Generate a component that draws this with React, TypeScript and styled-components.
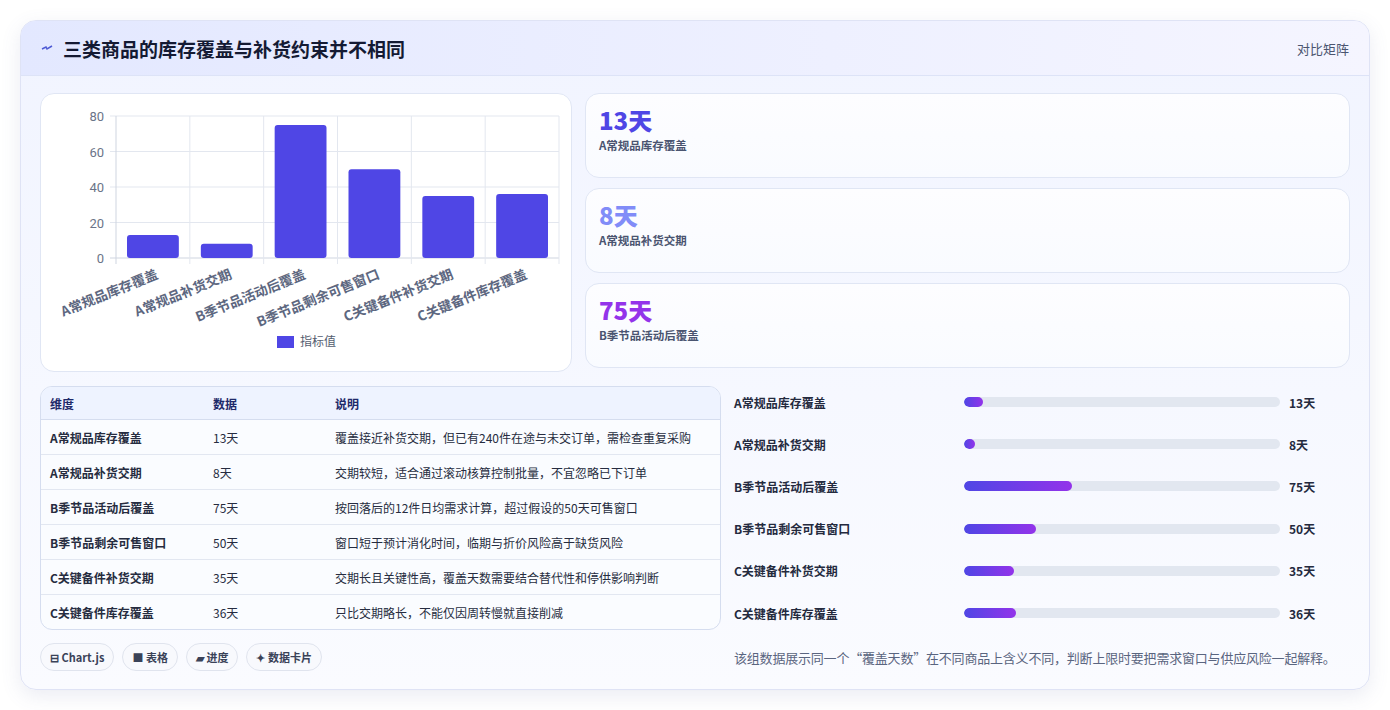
import React from "react";
import styled, { createGlobalStyle } from "styled-components";

const GlobalStyle = createGlobalStyle`
    body {
        margin: 0;
        background: #ffffff;
        font-family: "Noto Sans CJK SC", "Noto Sans", sans-serif;
    }
`;

const rows = [
    { name: "A常规品库存覆盖", value: 13, note: "覆盖接近补货交期，但已有240件在途与未交订单，需检查重复采购" },
    { name: "A常规品补货交期", value: 8, note: "交期较短，适合通过滚动核算控制批量，不宜忽略已下订单" },
    { name: "B季节品活动后覆盖", value: 75, note: "按回落后的12件日均需求计算，超过假设的50天可售窗口" },
    { name: "B季节品剩余可售窗口", value: 50, note: "窗口短于预计消化时间，临期与折价风险高于缺货风险" },
    { name: "C关键备件补货交期", value: 35, note: "交期长且关键性高，覆盖天数需要结合替代性和停供影响判断" },
    { name: "C关键备件库存覆盖", value: 36, note: "只比交期略长，不能仅因周转慢就直接削减" },
];

const Page = styled.div`
    padding: 20px;
`;
const Card = styled.div`
    border: 1px solid #dfe3f5;
    border-radius: 16px;
    overflow: hidden;
    background: linear-gradient(180deg, #f1f4ff 0%, #fafbff 100%);
    box-shadow: 0 6px 20px rgba(90, 100, 160, 0.12);
`;
const Header = styled.div`
    height: 54px;
    display: flex;
    align-items: center;
    justify-content: space-between;
    padding: 0 20px;
    background: linear-gradient(90deg, #e3e8ff 0%, #eef0ff 60%, #f5f5ff 100%);
    border-bottom: 1px solid #dde3f7;
`;
const Title = styled.h1`
    margin: 0;
    font-size: 19px;
    font-weight: 700;
    color: #141a33;
    display: flex;
    align-items: center;
    gap: 10px;
`;
const Tag = styled.span`
    font-size: 13px;
    color: #4b5570;
`;
const Body = styled.div`
    padding: 17px 19px 18px 19px;
    display: flex;
    flex-direction: column;
    gap: 14px;
`;
const Row = styled.div<{ $left: number; $gap: number }>`
    display: grid;
    grid-template-columns: ${p => p.$left}px 1fr;
    column-gap: ${p => p.$gap}px;
`;
const Panel = styled.div`
    background: #ffffff;
    border: 1px solid #e0e6f4;
    border-radius: 14px;
`;
const ChartPanel = styled(Panel)`
    height: 277px;
`;
const Stats = styled.div`
    display: flex;
    flex-direction: column;
    gap: 10px;
`;
const StatCard = styled(Panel)`
    height: 85px;
    padding: 10px 13px;
    box-sizing: border-box;
    background: linear-gradient(180deg, #fdfdff, #f9fbff);
`;
const StatValue = styled.div<{ $color: string }>`
    font-size: 24px;
    font-weight: 800;
    line-height: 32px;
    color: ${p => p.$color};
`;
const StatLabel = styled.div`
    font-size: 11.5px;
    font-weight: 700;
    color: #4a5470;
    margin-top: 1px;
`;
const LeftCol = styled.div`
    display: flex;
    flex-direction: column;
    gap: 13px;
`;
const Table = styled.table`
    width: 100%;
    border-collapse: separate;
    border-spacing: 0;
    border: 1px solid #d5ddef;
    border-radius: 12px;
    overflow: hidden;
    font-size: 12px;
    background: #fafcff;
    th {
        text-align: left;
        font-weight: 700;
        color: #1e2a6a;
        background: #eef3ff;
        height: 32px;
        border-bottom: 1px solid #d5ddef;
        padding: 0 9px;
    }
    td {
        height: 34px;
        padding: 0 9px;
        color: #262c40;
        border-bottom: 1px solid #e2e7f1;
    }
    tr:last-child td {
        border-bottom: none;
    }
`;
const NameCell = styled.td`
    font-weight: 700;
    width: 145px;
`;
const Chips = styled.div`
    display: flex;
    gap: 8px;
`;
const Chip = styled.span`
    border: 1px solid #e0e4ee;
    border-radius: 14px;
    background: #f8f9fd;
    font-size: 11px;
    font-weight: 700;
    color: #3a4258;
    height: 26px;
    padding: 0 9px;
    display: inline-flex;
    align-items: center;
    gap: 3px;
`;
const RightCol = styled.div`
    display: flex;
    flex-direction: column;
    margin-top: -5px;
`;
const BarRow = styled.div`
    display: grid;
    grid-template-columns: 221px 316px 1fr;
    align-items: center;
    height: 42.2px;
    column-gap: 9px;
`;
const BarLabel = styled.span`
    font-size: 12px;
    font-weight: 700;
    color: #242a3e;
`;
const Track = styled.div`
    height: 10px;
    border-radius: 5px;
    background: #e2e7f0;
    overflow: hidden;
`;
const Fill = styled.div`
    height: 100%;
    border-radius: 5px;
    background: linear-gradient(90deg, #4f46e5, #9333ea);
`;
const BarValue = styled.span`
    font-size: 12px;
    font-weight: 700;
    color: #242a3e;
`;
const Note = styled.p`
    margin: 14px 0 0;
    font-size: 13px;
    color: #5a6580;
    letter-spacing: -0.2px;
`;

function Chart() {
    const x0 = 75, x1 = 518, y0 = 164, y1 = 22;
    const step = (x1 - x0) / 6;
    const yOf = (v: number) => y0 - ((y0 - y1) * v) / 80;
    return (
        <svg width="531" height="277" viewBox="0 0 531 277">
            {[0, 20, 40, 60, 80].map(v => (
                <g key={v}>
                    <line x1={x0 - 6} x2={x1} y1={yOf(v)} y2={yOf(v)} stroke={v === 0 ? "#cfd5e0" : "#e3e7ef"} />
                    <text x={x0 - 12} y={yOf(v) + 5} textAnchor="end" fontSize="13" fill="#6b7488" fontFamily="Roboto, sans-serif">{v}</text>
                </g>
            ))}
            {Array.from({ length: 7 }).map((_, i) => (
                <line key={i} x1={x0 + i * step} x2={x0 + i * step} y1={y1} y2={y0 + 6} stroke={i === 0 ? "#cfd5e0" : "#e3e7ef"} />
            ))}
            {rows.map((r, i) => (
                <g key={r.name}>
                    <rect x={x0 + i * step + 11} y={yOf(r.value)} width={step - 22} height={y0 - yOf(r.value)} rx="3" fill="#4f46e5" />
                    <text
                        transform={`translate(${x0 + i * step + step / 2 + 6}, ${y0 + 20}) rotate(-22)`}
                        textAnchor="end"
                        fontSize="13.5"
                        fontWeight="700"
                        fill="#5d6780"
                        fontFamily='"Noto Sans CJK SC", sans-serif'
                    >
                        {r.name}
                    </text>
                </g>
            ))}
            <rect x="236" y="242" width="17" height="12" fill="#4f46e5" />
            <text x="259" y="252" fontSize="12" fill="#555d70" fontFamily='"Noto Sans CJK SC", sans-serif'>指标值</text>
        </svg>
    );
}

export default function App() {
    const colors = ["#4f46e5", "#818cf8", "#9333ea"];
    return (
        <Page>
            <GlobalStyle />
            <Card>
                <Header>
                    <Title>
                        <svg width="12" height="12" viewBox="0 0 12 12">
                            <path d="M1 7 L5 5 L6 7 L11 4" stroke="#4f5bd5" strokeWidth="1.5" fill="none" />
                        </svg>
                        三类商品的库存覆盖与补货约束并不相同
                    </Title>
                    <Tag>对比矩阵</Tag>
                </Header>
                <Body>
                    <Row $left={532} $gap={13}>
                        <ChartPanel>
                            <Chart />
                        </ChartPanel>
                        <Stats>
                            {rows.slice(0, 3).map((r, i) => (
                                <StatCard key={r.name}>
                                    <StatValue $color={colors[i]}>{r.value}天</StatValue>
                                    <StatLabel>{r.name}</StatLabel>
                                </StatCard>
                            ))}
                        </Stats>
                    </Row>
                    <Row $left={681} $gap={13}>
                        <LeftCol>
                            <Table>
                                <thead>
                                    <tr>
                                        <th>维度</th>
                                        <th style={{ width: 104 }}>数据</th>
                                        <th>说明</th>
                                    </tr>
                                </thead>
                                <tbody>
                                    {rows.map(r => (
                                        <tr key={r.name}>
                                            <NameCell>{r.name}</NameCell>
                                            <td>{r.value}天</td>
                                            <td>{r.note}</td>
                                        </tr>
                                    ))}
                                </tbody>
                            </Table>
                            <Chips>
                                <Chip>⊟ Chart.js</Chip>
                                <Chip>■ 表格</Chip>
                                <Chip>▰ 进度</Chip>
                                <Chip>✦ 数据卡片</Chip>
                            </Chips>
                        </LeftCol>
                        <RightCol>
                            {rows.map(r => (
                                <BarRow key={r.name}>
                                    <BarLabel>{r.name}</BarLabel>
                                    <Track>
                                        <Fill style={{ width: `${Math.max((r.value / 220) * 100, 3.5)}%` }} />
                                    </Track>
                                    <BarValue>{r.value}天</BarValue>
                                </BarRow>
                            ))}
                            <Note>该组数据展示同一个“覆盖天数”在不同商品上含义不同，判断上限时要把需求窗口与供应风险一起解释。</Note>
                        </RightCol>
                    </Row>
                </Body>
            </Card>
        </Page>
    );
}
